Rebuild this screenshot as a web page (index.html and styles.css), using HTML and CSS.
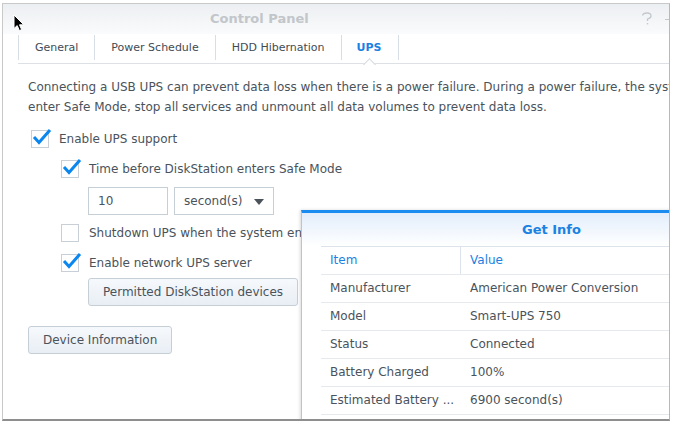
FILE: index.html
```html
<!DOCTYPE html>
<html>
<head>
<meta charset="utf-8">
<link rel="stylesheet" href="styles.css">
</head>
<body>
<div class="window">
  <div class="titlebar">
    <span class="title">Control Panel</span>
    <span class="tools">
      <svg class="help" width="12" height="14" viewBox="0 0 12 14"><path d="M1.5 3.5 Q2 1 6 1 Q10 1 10 4 Q10 6 6.5 7 L6.5 9" fill="none" stroke="#c4c8cc" stroke-width="1.3"/><rect x="5.8" y="11" width="1.4" height="1.4" fill="#c4c8cc"/></svg>
      <span class="min"></span>
    </span>
  </div>
  <div class="tabs">
    <div class="tab">General</div>
    <div class="tab">Power Schedule</div>
    <div class="tab">HDD Hibernation</div>
    <div class="tab active">UPS</div>
  </div>
  <div class="content">
    <p class="desc">Connecting a USB UPS can prevent data loss when there is a power failure. During a power failure, the system will<br>enter Safe Mode, stop all services and unmount all data volumes to prevent data loss.</p>
    <div class="row"><span class="box"><svg class="tick" viewBox="0 0 20 18" width="20" height="18"><path d="M2 9 L7 14.5 L18 2" fill="none" stroke="#0a86ef" stroke-width="3"/></svg></span>Enable UPS support</div>
    <div class="sub">
      <div class="row"><span class="box"><svg class="tick" viewBox="0 0 20 18" width="20" height="18"><path d="M2 9 L7 14.5 L18 2" fill="none" stroke="#0a86ef" stroke-width="3"/></svg></span>Time before DiskStation enters Safe Mode</div>
      <div class="fields">
        <div class="input">10</div>
        <div class="select">second(s)<span class="caret"></span></div>
      </div>
      <div class="row"><span class="box"></span>Shutdown UPS when the system enters Safe Mode</div>
      <div class="row"><span class="box"><svg class="tick" viewBox="0 0 20 18" width="20" height="18"><path d="M2 9 L7 14.5 L18 2" fill="none" stroke="#0a86ef" stroke-width="3"/></svg></span>Enable network UPS server</div>
      <div class="btnrow"><div class="btn">Permitted DiskStation devices</div></div>
    </div>
    <div class="btnrow main"><div class="btn">Device Information</div></div>
  </div>

  <div class="dialog">
    <div class="dhead">Get Info</div>
    <div class="table">
      <div class="tr th"><div class="c1">Item</div><div class="c2">Value</div></div>
      <div class="tr"><div class="c1">Manufacturer</div><div class="c2">American Power Conversion</div></div>
      <div class="tr"><div class="c1">Model</div><div class="c2">Smart-UPS 750</div></div>
      <div class="tr"><div class="c1">Status</div><div class="c2">Connected</div></div>
      <div class="tr"><div class="c1">Battery Charged</div><div class="c2">100%</div></div>
      <div class="tr"><div class="c1">Estimated Battery ...</div><div class="c2">6900 second(s)</div></div>
    </div>
  </div>

  <svg class="cursor" width="12" height="18" viewBox="0 0 12 18"><path d="M1 1 L1 14.5 L4.2 11.6 L6.4 16.6 L8.6 15.6 L6.5 10.8 L10.8 10.8 Z" fill="#000" stroke="#fff" stroke-width="1"/></svg>
</div>
</body>
</html>
```

FILE: styles.css
```css
* { box-sizing: border-box; }
html, body { margin: 0; padding: 0; background: #fff; }
body { font-family: "DejaVu Sans", Verdana, sans-serif; font-size: 12px; color: #414b55; }

.window {
  position: relative;
  margin: 3px 0 0 2px;
  width: 668px;
  height: 418px;
  border: 1px solid #c9c9c9;
  border-bottom: 2px solid #8e8e8e;
  border-right-color: #b8b8b8;
  overflow: hidden;
  background: #fff;
}

.titlebar {
  height: 30px;
  background: linear-gradient(#eceff2, #fafbfc);
  display: flex;
  align-items: center;
  padding-left: 207px;
  padding-bottom: 1px;
  position: relative;
}
.title { font-weight: bold; font-size: 13px; color: #c2c6ca; }
.tools { position: absolute; right: -4px; top: 8px; display: flex; align-items: center; gap: 18px; }
.help { margin-right: -6px; }
.min { width: 8px; height: 1px; background: #c4c8cc; display: block; }

.tabs {
  margin-left: 15px;
  height: 30px;
  display: flex;
  border-bottom: 1px solid #dde1e6;
  padding-top: 1px;
}
.tab {
  height: 25px;
  line-height: 25px;
  padding: 0 16px 0 16px;
  border-left: 1px solid #d7dee6;
  color: #414b55;
  font-size: 11px;
  position: relative;
}
.tab.active { color: #1a82e2; font-weight: bold; border-right: 1px solid #d7dee6; padding: 0 16px 0 15px; }
.tab.active::after {
  content: "";
  position: absolute;
  left: 23px;
  top: 25px;
  width: 8px;
  height: 8px;
  border-left: 1px solid #d2d8df;
  border-top: 1px solid #d2d8df;
  background: #fff;
  transform: rotate(45deg);
}

.content { padding: 13px 0 0 25px; }
.desc { margin: 0 0 7px; white-space: nowrap; line-height: 20px; font-size: 12px; color: #4a535c; }

.row { display: flex; align-items: center; height: 30px; white-space: nowrap; color: #4a535c; }
.box {
  width: 18px; height: 18px;
  border: 1px solid #c8cfd7;
  background: #fff;
  margin: 0 10px 0 3px;
  position: relative;
  flex: none;
}
.tick { position: absolute; left: 0; top: -3px; }

.sub { padding-left: 30px; }
.fields { display: flex; gap: 6px; padding: 3px 0 3px 30px; }
.input, .select {
  height: 28px;
  border: 1px solid #c6ced6;
  line-height: 26px;
  padding-left: 9px;
  color: #4a535c;
}
.input { width: 80px; }
.select { width: 100px; position: relative; }
.caret {
  position: absolute; right: 9px; top: 11px;
  border-left: 5px solid transparent; border-right: 5px solid transparent;
  border-top: 6px solid #4a525a;
}

.btnrow { padding: 0; }
.btn {
  display: inline-block;
  height: 28px;
  line-height: 26px;
  padding: 0 14px;
  border: 1px solid #c6ced6;
  border-radius: 3px;
  background: linear-gradient(#f6f9fc, #e8eef4);
  color: #4a535c;
}
.sub .btnrow .btn { margin-left: 30px; }
.btnrow.main { padding-top: 20px; }

.dialog {
  position: absolute;
  left: 298px;
  top: 206px;
  width: 500px;
  height: 230px;
  border-top: 3px solid #1a8cf0;
  border-left: 1px solid #bfc4c9;
  background: #fff;
  box-shadow: -1px 0 3px rgba(0,0,0,.15);
}
.dhead {
  height: 33px;
  line-height: 34px;
  text-align: center;
  font-weight: bold;
  font-size: 13px;
  color: #1a82e2;
  background: linear-gradient(#e2edfb, #fff);
}
.table { margin-left: 19px; border-top: 1px solid #dce3ea; }
.tr { display: flex; height: 28px; line-height: 27px; border-bottom: 1px solid #e6eaee; white-space: nowrap; color: #4a535c; }
.c1 { width: 140px; padding-left: 9px; }
.c2 { padding-left: 9px; }
.th { color: #1a82e2; }
.th .c1 { border-right: 1px solid #dce3ea; }

.cursor { position: absolute; left: 10px; top: 10px; }
```
